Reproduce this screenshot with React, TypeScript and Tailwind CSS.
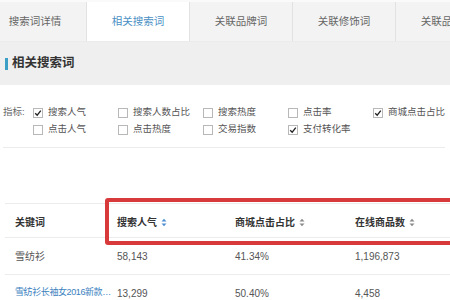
import React from "react";

const FONT = { fontFamily: '"Liberation Sans", "Noto Sans CJK SC", sans-serif' };

function Box({ checked }: { checked?: boolean }) {
  return (
    <span className="w-[10px] h-[10px] border border-[#b8b8b8] bg-white flex items-center justify-center shrink-0">
      {checked && (
        <svg width="8" height="8" viewBox="0 0 8 8">
          <path d="M1.2 4.2 L3.2 6.2 L6.8 1.6" stroke="#222" strokeWidth="1.3" fill="none" />
        </svg>
      )}
    </span>
  );
}

function Sort({ active }: { active?: boolean }) {
  const c = active ? "#4f8fd0" : "#8a8a8a";
  return (
    <svg width="6" height="9" viewBox="0 0 6 9" className="ml-[4px]">
      <path d="M0.5 3.5 L3 0.8 L5.5 3.5 Z" fill={c} />
      <path d="M0.5 5.5 L3 8.2 L5.5 5.5 Z" fill={c} />
    </svg>
  );
}

const tabs = ["搜索词详情", "相关搜索词", "关联品牌词", "关联修饰词", "关联品类词"];

const row1: [string, boolean][] = [
  ["搜索人气", true],
  ["搜索人数占比", false],
  ["搜索热度", false],
  ["点击率", false],
  ["商城点击占比", true],
];
const row2: [string, boolean][] = [
  ["点击人气", false],
  ["点击热度", false],
  ["交易指数", false],
  ["支付转化率", true],
];

export default function App() {
  return (
    <div className="w-[450px] h-[300px] overflow-hidden bg-white relative" style={FONT}>
      {/* tabs */}
      <div className="h-[42px] bg-[#f3f3f3] border-t-[2px] border-[#fafafa] border-b border-b-[#ebebeb] overflow-hidden">
        <div className="flex -ml-[16px] h-full">
          {tabs.map((t, i) => (
            <div
              key={t}
              className={`w-[103px] shrink-0 h-full flex items-center justify-center text-[10.5px] border-r border-[#e2e2e2] whitespace-nowrap ${
                i === 1 ? "bg-white text-[#4a8fc4]" : "text-[#666]"
              }`}
            >
              {t}
            </div>
          ))}
        </div>
      </div>

      {/* section header */}
      <div className="h-[43px] bg-[#efefef] flex items-center pl-[5px]">
        <span className="w-[3px] h-[12px] bg-[#3b9fc6]" />
        <span className="ml-[4px] text-[12.5px] font-bold text-[#333]">相关搜索词</span>
      </div>

      {/* filters */}
      <div className="pt-[19px] pl-[3px] pr-[5px] overflow-hidden">
        <div className="flex">
          <div className="w-[30px] shrink-0 text-[9.5px] text-[#666] h-[17px] flex items-center whitespace-nowrap">指标:</div>
          <div className="flex flex-col shrink-0">
            <div className="flex h-[17px] items-center">
              {row1.map(([l, c]) => (
                <div key={l} className="w-[85px] shrink-0 flex items-center">
                  <Box checked={c} />
                  <span className="ml-[5px] text-[9.5px] text-[#555] whitespace-nowrap">{l}</span>
                </div>
              ))}
            </div>
            <div className="flex h-[17px] items-center">
              {row2.map(([l, c]) => (
                <div key={l} className="w-[85px] shrink-0 flex items-center">
                  <Box checked={c} />
                  <span className="ml-[5px] text-[9.5px] text-[#555] whitespace-nowrap">{l}</span>
                </div>
              ))}
            </div>
          </div>
        </div>
        <div className="mt-[9px] border-b border-[#ececec]" />
      </div>

      {/* table */}
      <div className="mt-[55px] pl-[5px]">
        <div className="border-t border-[#ececec] h-[34px] pt-[4px] flex items-center text-[10px] font-bold text-[#333]">
          <div className="w-[112px] pl-[10px]">关键词</div>
          <div className="w-[118px] flex items-center">搜索人气<Sort active /></div>
          <div className="w-[120px] flex items-center">商城点击占比<Sort /></div>
          <div className="flex items-center">在线商品数<Sort /></div>
        </div>
        <div className="border-t border-[#ececec] h-[37px] flex items-center text-[10px] text-[#555]">
          <div className="w-[112px] pl-[10px]">雪纺衫</div>
          <div className="w-[118px]">58,143</div>
          <div className="w-[120px]">41.34%</div>
          <div>1,196,873</div>
        </div>
        <div className="border-t border-[#ececec] h-[37px] flex items-center text-[10px] text-[#555]">
          <div className="w-[112px] pl-[10px] text-[9px] tracking-[-0.4px] text-[#3a7fc0] whitespace-nowrap">雪纺衫长袖女2016新款…</div>
          <div className="w-[118px]">13,299</div>
          <div className="w-[120px]">50.40%</div>
          <div>4,458</div>
        </div>
      </div>

      {/* red annotation box */}
      <div className="absolute left-[105px] top-[198px] w-[360px] h-[47px] border-[4px] border-[#d8393b] rounded-[3px]" />
    </div>
  );
}
